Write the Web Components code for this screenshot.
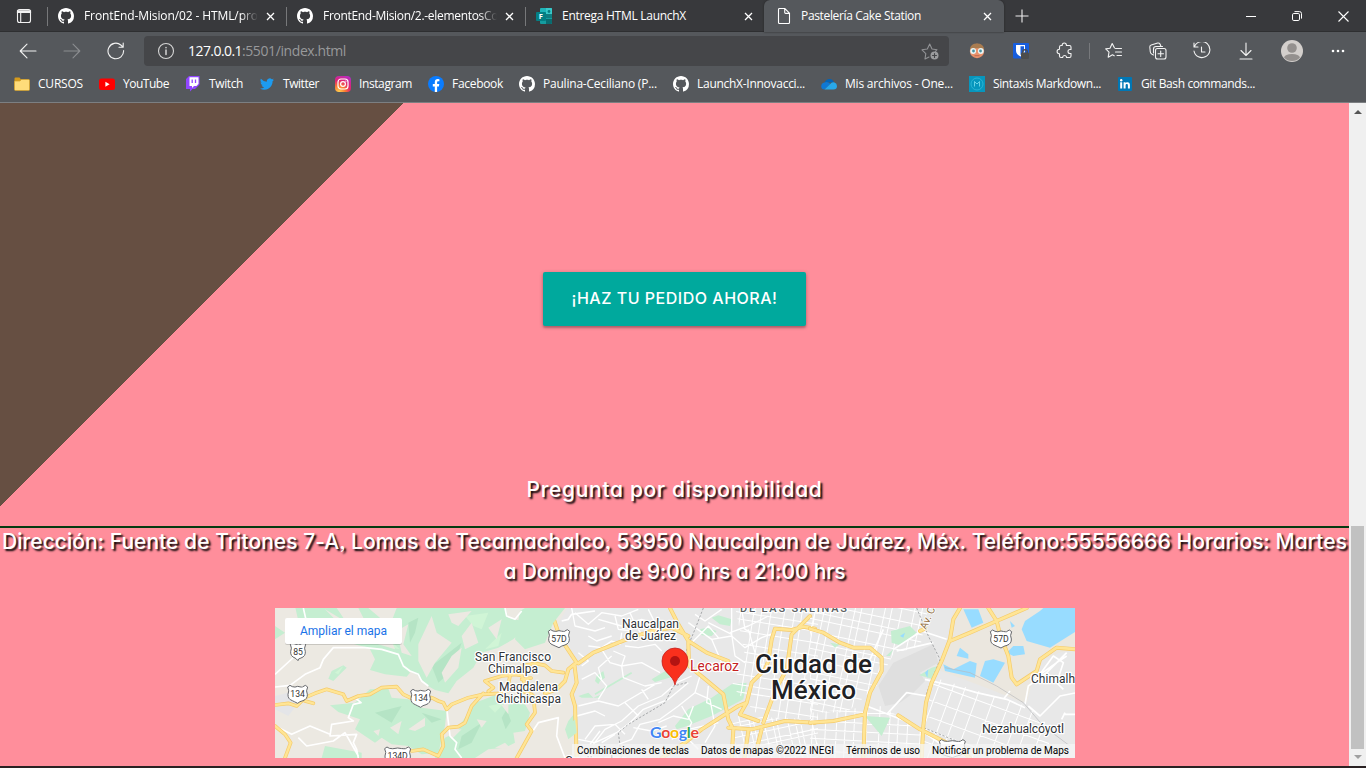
<!DOCTYPE html>
<html lang="es">
<head>
<meta charset="utf-8">
<title>Pastelería Cake Station</title>
<style>
html,body{margin:0;height:100%;overflow:hidden;background:#2a2223}
</style>
</head>
<body>
<browser-window></browser-window>
<script>
const GH='<svg width="16" height="16" viewBox="0 0 16 16"><path fill="#fff" d="M8 0C3.58 0 0 3.58 0 8c0 3.54 2.29 6.53 5.47 7.59.4.07.55-.17.55-.38 0-.19-.01-.82-.01-1.49-2.01.37-2.53-.49-2.69-.94-.09-.23-.48-.94-.82-1.13-.28-.15-.68-.52-.01-.53.63-.01 1.08.58 1.23.82.72 1.21 1.87.87 2.33.66.07-.52.28-.87.51-1.07-1.78-.2-3.64-.89-3.64-3.95 0-.87.31-1.59.82-2.15-.08-.2-.36-1.02.08-2.12 0 0 .67-.21 2.2.82.64-.18 1.32-.27 2-.27s1.36.09 2 .27c1.53-1.04 2.2-.82 2.2-.82.44 1.1.16 1.92.08 2.12.51.56.82 1.27.82 2.15 0 3.07-1.87 3.75-3.65 3.95.29.25.54.73.54 1.48 0 1.07-.01 1.93-.01 2.2 0 .21.15.46.55.38A8.01 8.01 0 0 0 16 8c0-4.42-3.58-8-8-8z"/></svg>';
const s=(b,w=16,v=w)=>`<svg width="${w}" height="${w}" viewBox="0 0 ${v} ${v}" fill="none">${b}</svg>`;
const ln=(b,c='#f2f2f2',w=18)=>`<svg width="${w}" height="${w}" viewBox="0 0 ${w} ${w}" fill="none" stroke="${c}" stroke-width="1.1" stroke-linecap="round" stroke-linejoin="round">${b}</svg>`;
const ICONS={
 gh:GH,
 tabs:ln('<rect x="2.5" y="2.5" width="13" height="13" rx="2"/><path d="M2.500 5.200h13M2.500 4h13" stroke-width="1.400"/><path d="M5.700 5.500v10"/>'),
 forms:s('<rect x="4" width="12" height="11" rx="1" fill="#1fb5b8"/><path d="M10 0h5q1 0 1 1v5h-6z" fill="#38c9ca"/><path d="M10 6h6v5h-6z" fill="#107c80"/><path d="M4 10h12v5q0 1-1 1H5q-1 0-1-1z" fill="#159da0"/><path d="M10 11h6v4q0 1-1 1h-5z" fill="#0a6c70"/><circle cx="13" cy="3.500" r="1.400" fill="#087b80"/><rect y="4" width="10" height="9" rx="1" fill="#037f84"/><text x="2.700" y="11.300" font-family="Open Sans,sans-serif" font-weight="700" font-size="7.500" fill="#fff">F</text>'),
 page:s('<path d="M3.500.5h5.300l4.700 4.700v9.300q0 1-1 1h-9q-1 0-1-1v-13q0-1 1-1zM8.700.7v3.800q0 .9.9.9h3.800" stroke="#fff" stroke-width="1.100"/>'),
 close:s('<path d="M1 1l7 7M8 1l-7 7" stroke="#fff" stroke-width="1.300"/>',9),
 plus:s('<path d="M7 .500v13M.500 7h13" stroke="#eee" stroke-width="1.100"/>',14),
 min:s('<path d="M0 5.500h10" stroke="#fff"/>',10),
 max:s('<rect x=".5" y="2.500" width="7" height="7" rx="1.300" stroke="#fff"/><path d="M2.500.6h5Q9.500.6 9.500 2.600v5" stroke="#fff"/>',10),
 x:s('<path d="M.5.5l10 10M10.500.5l-10 10" stroke="#fff" stroke-width="1.100"/>',11),
 back:ln('<path d="M17 9H1.500M8 2.200L1.200 9 8 15.800"/>'),
 fwd:ln('<path d="M1 9h15.500M10 2.200L16.800 9 10 15.800"/>','#8b8d90'),
 reload:ln('<path d="M16.600 8.500A7.800 7.800 0 1 1 13.800 3L16 5M16.200 1v4.200h-4.200"/>'),
 info:ln('<circle cx="9" cy="9" r="7.500"/><path d="M9 8v4.500M9 5.500v.3" stroke-width="1.500"/>','#d5d5d5'),
 staradd:ln('<path d="M8 15l-4 2 .8-5.400L1 7.800l5.300-.8L8.700 2l2.300 5 5 .7-1.500 1.600"/><circle cx="13.500" cy="13.500" r="4" fill="#9b9c9e" stroke="none"/><path d="M13.500 11.500v4M11.500 13.500h4" stroke="#454649"/>','#919295'),
 face:s('<circle cx="8" cy="8" r="7.200" fill="#e9926c"/><path d="M.9 6.500Q1.500.6 8 .6t7.100 5.900Q8 4 .9 6.500z" fill="#a97c50"/><circle cx="4.200" cy="8" r="2.900" fill="#e9f5f5"/><circle cx="11.800" cy="8" r="2.900" fill="#e9f5f5"/><circle cx="4.500" cy="8" r="1.400" fill="#4a93a3"/><circle cx="11.500" cy="8" r="1.400" fill="#4a93a3"/><path d="M5.500 12.700h5" stroke="#c06a50"/>'),
 bit:s('<rect width="16" height="15.500" rx="1" fill="#175ddc"/><path d="M3 2h9v6q0 3-4.500 5.500Q3 11 3 8z" fill="#fff"/><path d="M7.500 3.300H11V8q0 1.500-3.500 4z" fill="#175ddc"/><rect x="8" y="9.500" width="8" height="6.500" rx="1" fill="#4c4c4c"/><path d="M9.700 10V8.700q0-2 2.300-2t2.300 2V10" stroke="#4c4c4c" stroke-width="1.400"/>'),
 puzzle:ln('<path d="M6.200 3.500V3.100a2.100 2.100 0 0 1 4.200 0v.4h3.100q1.500 0 1.500 1.500v2.500h-1a2 2 0 0 0 0 4h1v2.500q0 1.500-1.500 1.500h-3v-.6a2 2 0 0 0-3.800 0v.6H5Q3.500 15.500 3.500 14v-2.300H3.300a2.200 2.200 0 0 1 0-4.400h.2V5q0-1.500 1.500-1.500z"/>'),
 fav:ln('<path d="M10.500 6.500h6M10.500 10h6M12 13.500h4.500M9.500 6L7.200 1.500 5 6.200l-4.300.7 3.300 3.300-.8 5 4.300-2.400 1.700 1"/>'),
 coll:ln('<rect x="6.500" y="6.500" width="10.500" height="10.500" rx="2"/><path d="M11.700 9v5.500M9 11.700h5.500M4.500 13L3 12.300Q1.500 11.500 1.300 10L.8 5Q.7 3.500 2.200 3L8.700 1q1.500-.3 2.300 1l.8 2M4.500 11V7q0-2.500 2.500-2.500h6.500"/>'),
 hist:ln('<path d="M1.500 4.500A8 8 0 1 1 1 9M1 1v4h4M8.500 5v5H12"/>'),
 down:ln('<path d="M9 1v12M4 8.500l5 5 5-5M3 17h12"/>'),
 avatar:s('<circle cx="11" cy="11" r="11" fill="#d3cfcc"/><circle cx="11" cy="8" r="4.800" fill="#94908e"/><path d="M3 17.500Q4 14 11 14t8 3.500Q16 21 11 21T3 17.500z" fill="#94908e"/>',22),
 dots:s('<g fill="#fff"><circle cx="2" cy="7" r="1.300"/><circle cx="7" cy="7" r="1.300"/><circle cx="12" cy="7" r="1.300"/></g>',14),
 folder:s('<path d="M.5 13.500v-11q0-1 1-1h4l1.500 2h7.500q1 0 1 1v9z" fill="#d59a1c"/><path d="M.5 5h5.500l1.500-1.500h7q1 0 1 1v9q0 1-1 1h-13q-1 0-1-1z" fill="#ffdc7a" stroke="#d3a02b" stroke-width=".7"/>'),
 yt:s('<rect y="2.500" width="16" height="11.500" rx="2.500" fill="#f00"/><path d="M6.400 5.800v4.900l4.200-2.450z" fill="#fff"/>'),
 tw:s('<path d="M1 3l3-3h10.500v8.500L10 13H7.500L5 15.500V13H1z" fill="#9146ff"/><path d="M4.500 1.200h9v6.600l-2 2.200H9l-2 2v-2H4.500z" fill="#fff"/><path d="M7.200 3.500v3.500M10.500 3.500v3.500" stroke="#9146ff" stroke-width="1.300"/>'),
 bird:`<svg width="14" height="16" viewBox="0 0 24 24"><path fill="#1d9bf0" d="M23.950 4.570a10 10 0 0 1-2.820.780 4.960 4.960 0 0 0 2.160-2.720c-.95.550-2 .96-3.130 1.180a4.920 4.920 0 0 0-8.380 4.480A13.900 13.900 0 0 1 1.640 3.160a4.920 4.920 0 0 0 1.520 6.570 4.900 4.900 0 0 1-2.230-.610v.060a4.920 4.920 0 0 0 3.950 4.830 5 5 0 0 1-2.210.080 4.930 4.930 0 0 0 4.600 3.420A9.870 9.870 0 0 1 0 19.540a14 14 0 0 0 7.550 2.210c9.050 0 14-7.500 14-13.980 0-.210 0-.420-.02-.630a9.900 9.900 0 0 0 2.420-2.550z"/></svg>`,
 ig:s('<defs><radialGradient id="g" cx=".25" cy="1" r="1.100"><stop offset="0" stop-color="#ffd34f"/><stop offset=".35" stop-color="#fb7b33"/><stop offset=".65" stop-color="#e2266c"/><stop offset="1" stop-color="#b62bc0"/></radialGradient></defs><rect width="16" height="16" rx="4" fill="url(#g)"/><rect x="3" y="3" width="10" height="10" rx="3" stroke="#fff" stroke-width="1.200"/><circle cx="8" cy="8" r="2.400" stroke="#fff" stroke-width="1.200"/><circle cx="10.900" cy="5.100" r=".7" fill="#fff"/>'),
 fb:s('<circle cx="8" cy="8" r="8" fill="#0a7cff"/><path d="M6.800 16v-5.600H4.800V8h2V6.300c0-2.100 1.200-3.200 3-3.200l1.600.1v2h-1c-1 0-1.300.6-1.300 1.200V8h2.200l-.4 2.400H9.100V16z" fill="#fff"/>'),
 od:s('<path d="M3.500 6.500Q5 3 8.500 3q3.500 0 4.500 3.500z" fill="#0364b8"/><path d="M.2 10.500q0-4 4.300-4.300Q7 5.600 9.500 8l-6 5.500Q.3 13.500.2 10.500z" fill="#0f78d4"/><path d="M9 8.300q2-2.800 4.500-1.700 2.500.9 2.500 3.600-.2 3.300-3.500 3.300H3.500z" fill="#28a8ea"/>'),
 md:s('<rect width="16" height="16" fill="#0796bd"/><circle cx="8" cy="8" r="6" stroke="#2eb6d6" stroke-width=".9"/><path d="M5.500 10.500v-5L8 8l2.500-2.500v5" stroke="#72d8ea" stroke-width=".9"/>'),
 li:s('<rect x="1" y="1" width="14" height="14" rx="1" fill="#0077b5"/><circle cx="4.200" cy="4.300" r="1.200" fill="#fff"/><path d="M3.200 6.300h2v6.200h-2zM6.600 6.300h1.900v.9c.9-1.600 4.400-1.500 4.400 1.500v3.800h-2V9.200c0-1.700-2.300-1.600-2.300 0v3.300h-2z" fill="#fff"/>')
};
function define(name,html,after){
 const t=document.createElement('template');t.innerHTML=html;
 customElements.define(name,class extends HTMLElement{
  connectedCallback(){ if(this.shadowRoot)return;
   this.attachShadow({mode:'open'}).append(t.content.cloneNode(true));
   if(after)after(this,this.shadowRoot);}
 });
}
define('browser-window',`<style>
:host{display:flex;flex-direction:column;width:1366px;height:768px;overflow:hidden;background:#2a2223;font-family:"Open Sans","Noto Sans",sans-serif;font-size:12px;color:#fff}
</style><tab-strip></tab-strip><tool-bar></tool-bar><bookmark-bar></bookmark-bar><page-view></page-view>`);

define('ui-icon',`<style>:host{display:inline-flex;align-items:center;justify-content:center;flex:none}svg{display:block}</style>`,(h,r)=>{
 r.innerHTML+=ICONS[h.getAttribute('name')];});

define('tab-strip',`<style>
:host{display:flex;height:32px;flex:none;background:#38393c;box-shadow:inset 0 -1px #2e2f31}
.m{width:47px;flex:none}.plus{width:36px}.sp{flex:1}.w{width:46px}
</style><ui-icon class="m" name="tabs"></ui-icon>
<browser-tab icon="gh" w="185" fade>FrontEnd-Mision/02 - HTML/progr</browser-tab>
<browser-tab icon="gh" w="186" fade>FrontEnd-Mision/2.-elementosCom</browser-tab>
<browser-tab icon="forms" w="124">Entrega HTML LaunchX</browser-tab>
<browser-tab icon="page" w="120" active>Pastelería Cake Station</browser-tab>
<ui-icon class="plus" name="plus"></ui-icon><span class="sp"></span>
<ui-icon class="w" name="min"></ui-icon><ui-icon class="w" name="max"></ui-icon><ui-icon class="w" name="x"></ui-icon>`);

define('browser-tab',`<style>
:host{display:flex;align-items:center;width:239px;box-sizing:border-box;padding-left:11px;flex:none;position:relative}
:host::before{content:"";position:absolute;left:0;top:7px;width:1px;height:19px;background:#77787a}
:host([active]){background:#55585c;border-radius:6px 6px 0 0;width:240px;margin-left:0;padding-left:12px;box-shadow:0 0 2px #222}
:host([active])::before{display:none}
.t{width:178px;margin-left:10px;overflow:hidden;white-space:nowrap;flex:none;padding-bottom:2px}
:host([active]) .t{margin-left:9px}
:host([fade]) .t{width:174px;margin-right:4px;-webkit-mask-image:linear-gradient(90deg,#000 90%,transparent)}
.c{width:16px}
</style><ui-icon class="i"></ui-icon><span class="t"><fit-text><slot></slot></fit-text></span><ui-icon class="c" name="close"></ui-icon>`,(h,r)=>{
 const i=document.createElement('ui-icon');i.setAttribute('name',h.getAttribute('icon'));r.querySelector('.i').replaceWith(i);
 r.querySelector('fit-text').setAttribute('w',h.getAttribute('w'));});

define('tool-bar',`<style>
:host{display:flex;align-items:center;height:38px;flex:none;background:#55585c;padding:0 6px;box-sizing:border-box}
ui-icon{width:44px}.url{display:flex;align-items:center;width:805px;height:30px;background:#454649;border-radius:4px;margin:0 6px;font-size:14px;color:#98999b;flex:none}
.url b{font-weight:400;color:#fff}.url b,.url fit-text{margin-bottom:1px}.url b fit-text{margin:0}.url .s{margin-left:auto;width:38px}.sep{width:1px;height:16px;margin:0 2px;background:#77797c;flex:none}.av{width:48px}
</style><ui-icon name="back"></ui-icon><ui-icon name="fwd"></ui-icon><ui-icon name="reload"></ui-icon>
<div class="url"><ui-icon name="info"></ui-icon><b><fit-text w="54">127.0.0.1</fit-text></b><fit-text w="104">:5501/index.html</fit-text><ui-icon class="s" name="staradd"></ui-icon></div>
<ui-icon name="face"></ui-icon><ui-icon name="bit"></ui-icon><ui-icon name="puzzle"></ui-icon><span class="sep"></span>
<ui-icon name="fav"></ui-icon><ui-icon name="coll"></ui-icon><ui-icon name="hist"></ui-icon><ui-icon name="down"></ui-icon><ui-icon class="av" name="avatar"></ui-icon><ui-icon name="dots"></ui-icon>`);

define('bookmark-bar',`<style>
:host{display:flex;align-items:center;gap:16px;height:33px;flex:none;background:#55585c;padding:0 14px 4px;box-sizing:border-box;border-bottom:1px solid #7c7f82}
</style>`,(h,r)=>{
 [['folder','CURSOS',45],['yt','YouTube',46],['tw','Twitch',34],['bird','Twitter',36],['ig','Instagram',53],['fb','Facebook',51],['gh','Paulina-Ceciliano (P...',114],['gh','LaunchX-Innovacci...',108],['od','Mis archivos - One...',108],['md','Sintaxis Markdown...',108],['li','Git Bash commands...',114]]
 .forEach(([i,t,w])=>{const e=document.createElement('book-mark');e.setAttribute('icon',i);e.setAttribute('w',w);e.textContent=t;r.append(e);});});
define('book-mark',`<style>:host{display:flex;align-items:center;gap:8px;flex:none;white-space:nowrap}ui-icon{width:16px}fit-text{margin-bottom:2px}</style>`,(h,r)=>{
 r.innerHTML+=`<ui-icon name="${h.getAttribute('icon')}"></ui-icon><fit-text w="${h.getAttribute('w')}"><slot></slot></fit-text>`;});

define('page-view',`<style>
:host{display:flex;height:663px;flex:none;background:#ff8e9b}
main{width:1349px;height:663px;flex:none;display:flex;flex-direction:column;align-items:center;background:linear-gradient(135deg,#664f42 0 285px,#ff8e9b 285px)}
order-button{margin-top:169px}
.q{margin-top:149px}
.hr{width:100%;height:2px;background:#053a10;margin:21px 0 -1px;flex:none}
map-embed{margin-top:21px}
</style><main><order-button>¡HAZ TU PEDIDO AHORA!</order-button>
<cake-line class="q" w="296">Pregunta por disponibilidad</cake-line><div class="hr"></div>
<cake-line w="1345">Dirección: Fuente de Tritones 7-A, Lomas de Tecamachalco, 53950 Naucalpan de Juárez, Méx. Teléfono:55556666 Horarios: Martes</cake-line>
<cake-line w="342">a Domingo de 9:00 hrs a 21:00 hrs</cake-line>
<map-embed></map-embed></main><scroll-bar></scroll-bar>`);
define('order-button',`<style>:host{display:flex;align-items:center;justify-content:center;width:263px;height:54px;flex:none;box-sizing:border-box;padding-bottom:3px;background:#00a99d;border-radius:2px;box-shadow:0 2px 2px rgba(0,0,0,.2),0 1px 4px rgba(0,0,0,.22);font:500 16px Inter,sans-serif;color:#fff}</style><fit-text w="206"><slot></slot></fit-text>`);
define('cake-line',`<style>:host{display:flex;justify-content:center;height:30px;line-height:30px;flex:none;white-space:nowrap;font-family:Inter,Lato,sans-serif;font-weight:500;font-size:21px;font-feature-settings:"cv11","ss03";color:#fff;text-shadow:2px 2px 2px #000}</style><fit-text><slot></slot></fit-text>`,(h,r)=>r.querySelector('fit-text').setAttribute('w',h.getAttribute('w')));
define('scroll-bar',`<style>
:host{display:flex;flex-direction:column;align-items:center;width:17px;height:663px;background:#f0f0f0}
i{display:block;width:0;border:4px solid transparent;border-top:0;border-bottom:4px solid #555;margin-top:7px}
.th{width:13px;height:223px;background:#c1c1c1;margin-top:412px}
.d{border-bottom:0;border-top:4px solid #a0a0a0;margin-top:6px}
</style><i></i><div class="th"></div><i class="d"></i>`);

/* map drawing helpers: casing + fill for main roads, white streets, filled areas */
const road=(w,...ds)=>{const d=ds.join('');return `<path d="${d}" fill="none" stroke="#f5cb6b" stroke-width="${w}" stroke-linejoin="round" stroke-linecap="round"/><path d="${d}" fill="none" stroke="#ffe595" stroke-width="${w-4}" stroke-linejoin="round" stroke-linecap="round"/>`;};
const st=(d,w=4)=>`<path d="${d}" fill="none" stroke="#fff" stroke-width="${w}" stroke-linejoin="round"/>`;
const poly=(f,...p)=>`<path fill="${f}" d="${p.map(q=>'M'+q+'Z').join('')}"/>`;
const shield=(x,y,t,w=60,hide)=>`<g transform="translate(${x} ${y})"><path d="M${-w/2} -22l7-5 7 4q8 3 ${w/2-14}-1q${w/2-14} 4 ${w/2-14} 1l7-4 7 5q-6 12-1 22 1 14-13 19-10 2-${w/2-14} 8-${w/2-18}-6-${w/2-14}-8-14-5-13-19 5-10-1-22z" fill="#fff" stroke="#66686c" stroke-width="3"/>${hide?'':`<text y="9" text-anchor="middle" font-size="26" fill="#333">${t}</text>`}</g>`;
const grid=(cx,cy,w,h,step,ang,sw=3)=>{let d='';const R=Math.max(w,h);for(let i=-R;i<=R;i+=step){const j=Math.round(6*Math.sin(i*3.1));d+=`M${i+j} ${-R}L${i+j} ${R}M${-R} ${i+j}L${R} ${i+j}`;}return `<g transform="translate(${cx} ${cy}) rotate(${ang})"><path d="${d}" stroke="#fff" stroke-width="${sw}" fill="none"/></g>`;};
const G='#c5eed1',B='#ece9e2',C='#98dcff';
const label=(x,y,t,w,fs=12,c='#2f3337',fw=400)=>`<text x="${x}" y="${y}" font-size="${fs}" textLength="${w}" fill="${c}" font-weight="${fw}" stroke="#fff" stroke-width="${fs>20?3:2.5}" stroke-linejoin="round" paint-order="stroke">${t}</text>`;
const left=poly(G,'60,0 690,0 700,35 740,45 740,75 715,100 670,125 620,140 595,185 545,225 520,262 480,252 455,238 425,205 385,186 345,140 250,118 170,95 70,45','280,120 345,130 405,200 395,212 330,205 285,192 300,160','160,218 170,195 205,178 215,185 195,205 175,225','165,298 240,290 285,250 340,248 350,275 400,280 440,305 515,315 510,360 490,440 440,445 400,420 350,415 320,395 300,410 240,370 255,340 190,318','735,15 750,6 870,6 835,50 810,110 750,130 720,100','560,350 600,290 660,268 735,270 765,320 750,375 715,380 720,410 690,425 640,430 600,456 480,456 510,395 550,375','0,60 30,80 0,100','150,420 260,440 260,456 140,456','870,370 900,340 905,380 880,400')
+poly('#b5e4c5','400,50 430,35 420,80 405,110','470,180 560,110 530,195 490,230','680,335 695,310 708,345 692,370','300,320 380,300 350,350','560,390 620,350 590,410 550,430','440,320 500,340 470,350')
+poly('#d0f5d6','570,30 640,20 620,70 595,60','630,130 680,80 670,120','180,200 205,180 190,205','640,300 690,290 660,320','240,40 260,60 250,110','340,100 375,130 350,125')
+poly(B,'185,6 250,6 275,55 250,40 265,105 250,85 215,50','150,10 200,40 235,90 180,40','280,6 365,6 350,45 330,95 300,85 320,40','300,85 340,80 360,130 310,115','365,75 400,55 385,115 410,150 380,140','430,115 470,30 485,80 530,110 480,170 455,215 430,165','520,25 590,15 550,60 530,50','560,90 590,50 610,110 570,130','530,150 560,125 550,185 510,230 500,200','640,65 680,40 665,100','345,365 380,345 370,385','400,370 450,335 450,360 420,375','295,375 315,370 310,390','660,425 690,410 710,430','515,376 560,370 530,400','605,340 635,345 620,365','680,298 700,290 700,325')
+poly('#e4e5e8','0,270 60,255 70,290 40,330 0,310')
+st('M85,6L95,50M60,150L0,205M0,243L45,238 90,205 135,185 145,160 175,125 270,125 320,130 370,145 385,180 405,195 430,205 440,225 460,240M240,275L258,290 235,295 220,335 235,345 170,355 165,390 245,385 235,410 245,430 250,456M0,360L50,385 105,360 165,385M70,395L95,420 175,405 210,380 250,450M515,305L525,390 545,410 540,430 560,456M690,6L695,30 720,40 740,15M770,380L790,350 850,335 845,390 870,456M860,45L880,40 890,25 960,15',5)
+road(11,'M0,297L40,292 65,300 90,275 120,262 155,250 205,265 215,285 250,270 285,265 320,245 365,242 385,265 420,282 470,275 490,285 505,290 515,310 530,295 580,275 625,265 670,262 710,250','M90,285L115,292','M0,360L30,385 47,410 30,456','M410,435L445,430 490,450 505,420 500,385 520,365 550,362 570,350 590,300 625,262','M640,256L655,245 630,225 680,210 720,205 740,208','M705,210L700,235 740,255 770,265','M775,270L780,320 755,355 770,375 745,420 725,456','M740,180L780,172 810,178 830,195 865,200','M740,208L750,235M740,220L768,216'),
mid='<path d="M70 0H820V470H105L75 350 90 240 70 200 100 170 60 100 35 60Z" fill="#e8e8e8"/>'
+poly(G,'320,220 370,190 395,180 390,210 330,228','390,360 430,310 500,275 560,235 605,230 595,280 500,330 420,362 395,370','465,70 485,65 515,75 500,90 470,88','500,35 520,28 560,40 555,60 525,55','155,210 175,195 180,215 165,225 160,235 150,225','100,270 130,260 145,275 170,265 160,275 110,275','60,370 95,340 95,315 70,345')
+'<path d="M150 265L260 200" stroke="'+G+'" stroke-width="5"/>'
+st('M80,6L90,60 150,75 180,65M130,120L170,125 200,105 225,115 230,80M160,40L230,60 290,40 360,60M90,20L130,55 170,20 230,30 280,10M170,130L195,170 230,180 235,215 300,240 350,230M205,135L240,150 230,180 290,170 345,200M240,120L280,125 330,115 350,135M430,230L370,280 295,310 255,350 215,380 150,410 100,400M440,210L395,230 350,270 280,300 230,345 180,370 145,415M465,210L450,260 400,300 345,340 285,355 260,400 220,415M100,300L160,285 220,300 330,235M95,330L150,315 180,330M410,300L440,350 420,390 460,430M340,350L385,330 430,340 445,300M450,260L495,280 510,360 480,410M490,240L485,290 530,310M380,400L430,370 520,350M265,365L320,375 365,360M200,150L160,185 170,220M110,220L150,200 185,240 160,280M100,140L130,165 110,180M210,30L220,70 260,75M130,90L155,105 200,90M290,250L310,280M240,290L280,330M430,50L500,100 560,90 560,6M450,25L480,45 530,10M430,120L490,60 520,95M560,90L600,125 650,95 690,80M555,80L610,60 670,30M490,50L560,85 570,150 600,170M610,70L630,140M500,100L530,170M590,10L600,70 620,80M120,400L150,360 210,355 240,385M135,415L165,375M170,410L210,385M280,70L300,100 350,85M255,20L270,55M310,10L330,50')
+'<g clip-path="url(#mc)">'+grid(700,240,330,330,31,9)+'</g><g clip-path="url(#mc2)">'+grid(670,380,330,220,23,-12)+'</g>'
+'<path d="M475 6L450 70 425 130 428 160M425 230L385 240 360 290 250 355 220 380 230 456" stroke="#999b9e" stroke-width="2.500" stroke-dasharray="7 5" fill="none"/>'
+road(12,'M15,6L40,80 55,110 95,170 88,175 70,190 60,225 35,250 0,262','M100,172L145,140 245,100 320,75 380,65 430,90','M88,175L95,230 80,265 90,300 95,456','M375,6L400,55 430,105 485,140 550,165','M430,110L432,180 475,215 535,265 550,340 565,370 560,456','M810,68L775,62 740,72 690,68 680,100 670,165 660,190 620,230 605,290 580,300 470,370 420,410 350,456','M795,30L740,85 725,190 690,255 655,350','M605,290L585,325 640,345','M550,365L620,370 720,345 810,350','M610,375L598,456M650,370L635,430'),
right='<path d="M430 0L640 0 800 0V120L700 160 640 290 540 250 380 190 415 100Z" fill="#ebe7df"/><g clip-path="url(#rc)">'+grid(90,100,240,170,29,12)+'</g><g clip-path="url(#rc3)">'+grid(100,370,250,170,32,3)+'</g><g clip-path="url(#rc2)">'+grid(530,350,350,220,43,20)+'</g>'
+'<path d="M205 240L250 170 370 115 385 170 330 200 345 225 310 260 270 290 225 300Z" fill="#dfdfdf"/>'
+poly(G,'243,75 300,60 320,80 270,118 245,110','228,150 250,130 240,150','328,208 365,185 385,180 370,220','165,330 240,335 215,390','60,110 90,115 75,125')
+poly(C,'460,10 505,10 520,50 485,65','645,45 690,15 700,6 800,6 800,75 720,125 650,105 635,70','600,45 615,60 605,65','590,140 610,120 640,120 645,145 610,150','440,150 450,125 475,145 475,158','400,175 430,190 480,165 500,172 495,215 405,195','510,210 525,165 550,160 585,170 550,230','270,90 285,80 280,95','345,200 355,190 352,215')
+st('M345,220L430,240 500,260 590,280 645,305M645,295L655,240 710,200 770,140M655,300L690,330 750,270 800,260M670,220L740,170 770,150M690,205L730,150 760,170 740,230M710,200L760,250M600,255L580,280M170,300L300,350 400,420M230,325L290,260 350,270M250,130L335,75 410,100M260,135L370,110M220,70L180,160M760,325L795,325M755,340L765,320',5)
+'<path d="M320 6L355 90 390 160 350 260 340 365 440 405" fill="none" stroke="#999b9e" stroke-width="2.500" stroke-dasharray="7 5"/><path d="M405 185L480 200 560 240 640 290 700 360 780 420" fill="none" stroke="#b8babd" stroke-width="2"/>'
+road(12,'M450,6L430,40 420,100 395,165 365,230 348,290 340,360 335,456','M420,105L480,80 560,45 650,6','M535,6L560,45 570,85 595,150 605,215 620,235 680,195 690,160 740,125 800,130','M0,68L40,80 90,110 130,125 180,125 215,155 215,195 180,260 165,320 160,456','M0,350L70,345 165,325','M265,328L330,370 400,405 450,430 480,456','M330,75L345,68');
define('map-embed',`<style>:host{display:block;width:800px;height:150px;flex:none;overflow:hidden}svg{display:block;font-family:Roboto,sans-serif}</style>
<svg width="800" height="150" viewBox="0 0 800 150">
<defs><clipPath id="mc"><path d="M570 0H820V340H650L560 240 600 150Z"/></clipPath><clipPath id="mc2"><path d="M560 330L820 340V470H560Z"/></clipPath>
<clipPath id="rc"><path d="M0 0H430L410 95 250 145 200 240 110 320H0Z"/></clipPath><clipPath id="rc3"><path d="M0 320L210 300 340 370V470H0Z"/></clipPath><clipPath id="rc2"><path d="M375 215L650 300 730 370 700 470H335L340 300Z"/></clipPath></defs>
<rect width="800" height="150" fill="${B}"/>
<g transform="translate(270 -2) scale(.33333)">${mid}</g>
<g transform="translate(0 -2) scale(.33333)">${left}</g>
<g transform="translate(535 -2) scale(.33333)"><path d="M25 0H440L405 170 560 240 650 290 690 150 800 130V470H25Z" fill="#e8e8e8"/>${right}</g>
<g transform="translate(0 -2) scale(.33333)">${shield(69,137,'85',46)}${shield(68,265,'134')}${shield(437,277,'134')}${shield(368,450,'134D',78)}</g>
<g transform="translate(270 -2) scale(.33333)">${shield(42,98,'57D',64)}</g><g transform="translate(535 -2) scale(.33333)">${shield(573,99,'57D',64)}${shield(427,428,'',78,1)}</g>
${label(347,20,'Naucalpan',57)}${label(350,32,'de Juárez',51)}${label(200,53,'San Francisco',76)}${label(213,65,'Chimalpa',50)}${label(224,83,'Magdalena',59)}${label(221,95,'Chichicaspa',65)}
${label(465,4,'DE LAS SALINAS',107,11,'#5b5d60',500)}${label(480,65,'Ciudad de',117,26,'#202124',500)}${label(496,91,'México',85,26,'#202124',500)}
${label(756,75,'Chimalh',44)}${label(707,125,'Nezahualcóyotl',82,12.5)}${label(415,63,'Lecaroz',49,14,'#c5221f')}
${label(290,157,'Cuajimalpa',62)}
<text transform="translate(651 22) rotate(-66)" font-size="10.500" fill="#8f6b3c" stroke="#fff" stroke-width="1.500" paint-order="stroke">Av. C</text>
<path d="M400 77C398 66 387 65 387 53a13 13 0 0 1 26 0C413 65 402 66 400 77Z" fill="#f9301d" stroke="#c5221f" stroke-width=".8"/><circle cx="400" cy="53" r="5" fill="#b31412"/>
<text x="375" y="129.500" font-size="16" font-family="Lato,sans-serif" font-weight="700" textLength="49" stroke="#fff" stroke-width="1.500" paint-order="stroke"><tspan fill="#4285f4">G</tspan><tspan fill="#ea4335">o</tspan><tspan fill="#fbbc04">o</tspan><tspan fill="#4285f4">g</tspan><tspan fill="#34a853">l</tspan><tspan fill="#ea4335">e</tspan></text>
<rect x="297" y="136" width="503" height="14" fill="#f5f5f5" opacity=".75"/>
<g font-size="10" fill="#000"><text x="302" y="146" textLength="112">Combinaciones de teclas</text><text x="426" y="146" textLength="133">Datos de mapas ©2022 INEGI</text><text x="571" y="146" textLength="74">Términos de uso</text><text x="657" y="146" textLength="137">Notificar un problema de Maps</text></g>
<rect x="10" y="11" width="117" height="26" rx="2" fill="#000" opacity=".15"/><rect x="10" y="10" width="117" height="26" rx="2" fill="#fff"/><text x="25" y="27" font-size="12" fill="#1a73e8" textLength="87">Ampliar el mapa</text>
</svg>`);
define('fit-text',`<style>:host{display:inline-block;white-space:nowrap}span{display:inline-block}</style><span><slot></slot></span>`,(h,r)=>{
 const sp=r.querySelector('span'),w=+h.getAttribute('w');
 let txt=h.textContent; if(!txt){const sl=h.querySelector('slot');txt=sl?sl.assignedNodes({flatten:true}).map(n=>n.textContent).join(''):'';}
 const n=txt.trim().length,nat=sp.getBoundingClientRect().width;
 if(w&&n&&nat){sp.style.letterSpacing=((w-nat)/n)+'px';h.style.width=w+'px';}
});
</script>
</body>
</html>
